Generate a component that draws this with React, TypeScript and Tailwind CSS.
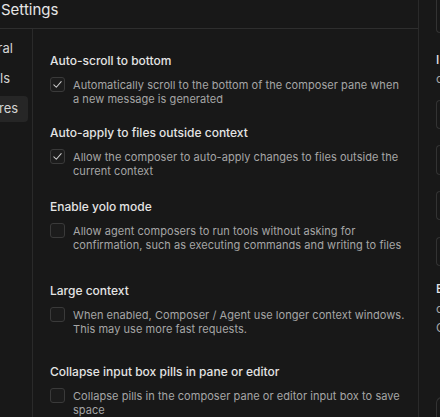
const sections = [
  {
    title: "Auto-scroll to bottom",
    lines: ["Automatically scroll to the bottom of the composer pane when", "a new message is generated"],
    checked: true,
    gap: "mt-[24px]",
  },
  {
    title: "Auto-apply to files outside context",
    lines: ["Allow the composer to auto-apply changes to files outside the", "current context"],
    checked: true,
    gap: "mt-[19px]",
  },
  {
    title: "Enable yolo mode",
    lines: [
      "Allow agent composers to run tools without asking for",
      "confirmation, such as executing commands and writing to files",
    ],
    checked: false,
    gap: "mt-[21px]",
  },
  {
    title: "Large context",
    lines: ["When enabled, Composer / Agent use longer context windows.", "This may use more fast requests."],
    checked: false,
    gap: "mt-[31px]",
  },
  {
    title: "Collapse input box pills in pane or editor",
    lines: ["Collapse pills in the composer pane or editor input box to save", "space"],
    checked: false,
    gap: "mt-[28px]",
  },
];

const navItems = [
  { label: "General", active: false },
  { label: "Models", active: false },
  { label: "Features", active: true },
];

function Checkbox({ checked }: { checked: boolean }) {
  return (
    <div className="w-[15px] h-[15px] shrink-0 rounded-[3px] border border-[#3a3a3a] bg-[#1c1c1c] flex items-center justify-center">
      {checked && (
        <svg width="11" height="11" viewBox="0 0 12 12" fill="none">
          <path d="M2 6.4 4.7 9 10 2.8" stroke="#cfcfcf" strokeWidth="1.1" strokeLinecap="round" strokeLinejoin="round" />
        </svg>
      )}
    </div>
  );
}

export default function App() {
  return (
    <div className="w-[440px] h-[417px] flex overflow-hidden bg-[#181818] font-['Inter',sans-serif]">
      {/* Settings pane */}
      <div className="w-[419px] shrink-0 flex flex-col border-r border-[#2a2a2a]">
        <div className="h-[29px] shrink-0 border-b border-[#2e2e2e] flex items-start">
          <span className="text-[15px] leading-[20px] text-[#e6e6e6] pl-[1px]">Settings</span>
        </div>
        <div className="flex flex-1 min-h-0">
          {/* Sidebar */}
          <div className="w-[33px] shrink-0 border-r border-[#2a2a2a] overflow-hidden pt-[7px] flex flex-col gap-[4px]">
            {navItems.map((item) => (
              <div
                key={item.label}
                className={`h-[26px] w-[28px] flex items-center rounded-r-[4px] ${item.active ? "bg-[#262626]" : ""}`}
              >
                <span className="ml-[-35px] whitespace-nowrap text-[13px] text-[#d4d4d4]">{item.label}</span>
              </div>
            ))}
          </div>

          {/* Feature list */}
          <div className="flex-1 min-w-0 pl-[17px]">
            {sections.map((s) => (
              <div key={s.title} className={s.gap}>
                <div className="text-[12px] leading-[16px] font-medium text-[#e4e4e4]">{s.title}</div>
                <div className="mt-[8px] flex gap-[8px]">
                  <Checkbox checked={s.checked} />
                  <p className="mt-[1px] whitespace-nowrap text-[11px] tracking-[0.05px] leading-[14px] text-[#a6a6a6]">
                    {s.lines[0]}
                    <br />
                    {s.lines[1]}
                  </p>
                </div>
              </div>
            ))}
          </div>
        </div>
      </div>

      {/* Right panel, partially visible */}
      <div className="flex-1 pl-[17px] flex flex-col">
        <div className="h-[33px] rounded-bl-[4px] border-l border-b border-[#333]" />
        <div className="mt-[19px] text-[12px] leading-[16px] font-medium text-[#e4e4e4]">I</div>
        <div className="mt-[2px] text-[12px] leading-[18px] text-[#a6a6a6]">c</div>
        <div className="mt-[12px] h-[30px] rounded-l-[4px] border border-r-0 border-[#333]" />
        <div className="mt-[16px] h-[30px] rounded-l-[4px] border border-r-0 border-[#333]" />
        <div className="mt-[16px] h-[29px] rounded-l-[4px] border border-r-0 border-[#333]" />
        <div className="mt-[17px] h-[30px] rounded-l-[4px] border border-r-0 border-[#333]" />
        <div className="mt-[15px] text-[12px] leading-[16px] font-medium text-[#e4e4e4]">E</div>
        <div className="mt-[2px] text-[12px] leading-[19px] text-[#a6a6a6]">c</div>
        <div className="text-[12px] leading-[19px] text-[#a6a6a6]">C</div>
        <div className="mt-[60px] h-[20px] rounded-tl-[6px] border-l border-t border-[#333]" />
      </div>
    </div>
  );
}
